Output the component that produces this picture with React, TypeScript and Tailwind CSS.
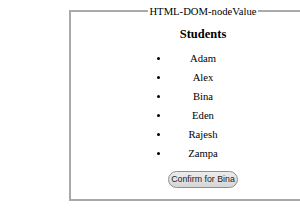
import React from "react";

const names = ["Adam", "Alex", "Bina", "Eden", "Rajesh", "Zampa"];

export default function App() {
  return (
    <div className="w-[300px] h-[210px] overflow-hidden bg-white pt-[4px] pl-[69px]">
      <fieldset className="w-[268px] border-2 border-[#a9a9a9] px-0 pb-[11px] font-['Liberation_Serif',serif] text-[10.67px] text-black">
        <legend className="mx-auto px-[1px] leading-[14px]">HTML-DOM-nodeValue</legend>
        <div className="flex flex-col">
          <h3 className="mt-[8.5px] text-center text-[12.5px] font-bold leading-[15px]">Students</h3>
          <ul className="mt-[7.5px] flex flex-col">
            {names.map((n) => (
              <li key={n} className="flex h-[19px] items-center pl-[86px]">
                <span className="h-[3px] w-[3px] rounded-full bg-black" />
                <span className="w-[86px] text-center leading-[19px]">{n}</span>
              </li>
            ))}
          </ul>
          <div className="mt-[8px] flex justify-center">
            <button className="h-[17px] rounded-full border border-[#8f8f8f] bg-gradient-to-b from-[#ececec] to-[#d6d6d6] px-[2px] font-['Liberation_Sans',Arial,sans-serif] text-[8.8px] leading-[15px] text-[#222]">
              Confirm for Bina
            </button>
          </div>
        </div>
      </fieldset>
    </div>
  );
}
